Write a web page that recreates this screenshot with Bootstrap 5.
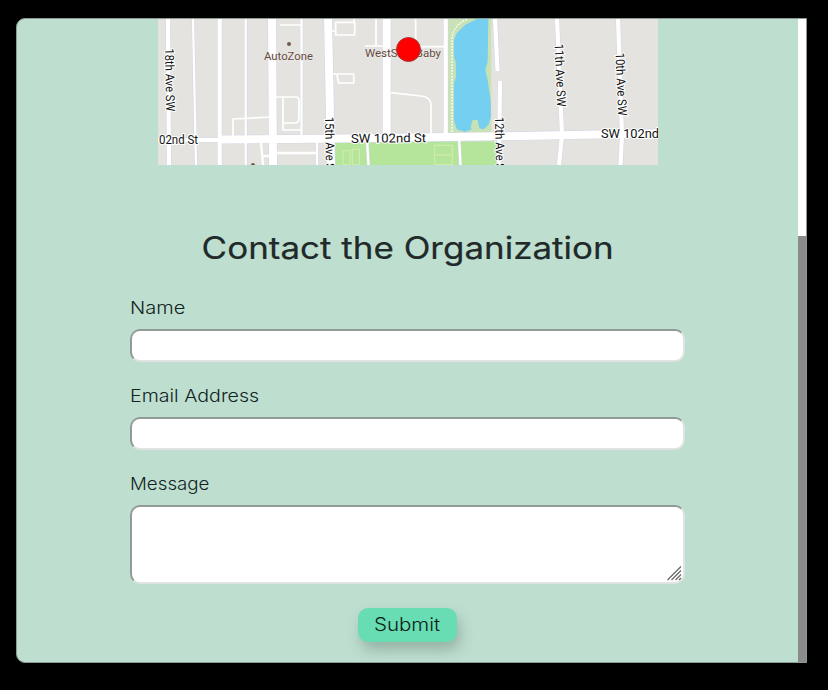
<!DOCTYPE html>
<html lang="en">
<head>
<meta charset="utf-8">
<meta name="viewport" content="width=device-width, initial-scale=1">
<title>Contact the Organization</title>
<link href="https://cdn.jsdelivr.net/npm/bootstrap@5.3.0/dist/css/bootstrap.min.css" rel="stylesheet">
<style>
body{background:#000;font-family:Inter,"Open Sans",sans-serif;color:#1c2b28;height:690px;overflow:hidden;padding:18px 21px 27px 16px}
.panel{width:791px;height:645px;border:1px solid #8b9b94;border-radius:9px 0 0 9px;background:#bedfd0}
.panel-body{margin-top:-1px;min-width:0}
.map{width:500px;height:147px}
.title{font-size:31px;font-weight:400;line-height:38px;margin:64px 0 27px;color:#212a29;white-space:nowrap;transform:scaleX(1.128);-webkit-text-stroke:.2px #212a29}
.contact-form{width:555px}
.groups{gap:20px}
.field-label{font-size:17.5px;line-height:27px;height:27px;margin-bottom:8px;font-weight:300;color:#12231f;transform-origin:0 50%;transform:scaleX(1.12)}
.label-name{transform:scaleX(1.145)}
.label-message{transform:scaleX(1.07)}
.field{border:2px solid;border-color:#929a96 #dfe3e1 #dfe3e1 #929a96;border-radius:10px;background:#fff;height:33px;width:100%;display:block;outline:0}
textarea.field{height:79px;resize:none}
.grip{right:3px;bottom:3px}
.send{width:99px;height:34px;border:0;border-radius:10px;background:#68dcb3;color:#0b1c16;font-size:18px;font-weight:300;box-shadow:3px 8px 14px rgba(60,80,70,.3);margin-top:24px;padding:0 0 1px}
.send span{display:inline-block;transform:scaleX(1.14)}
.track{width:8px;background:#fff;padding-top:217px}
.thumb{background:#8b8b8b}
.map text{font-family:Roboto,sans-serif;font-size:12.5px;fill:#111;stroke:#fff;stroke-width:2px;paint-order:stroke}
.map .poi{fill:#654a3b;stroke:#eee;stroke-width:1px;font-size:11.5px}
.roads{fill:none;stroke-linejoin:round}
.casing{stroke:#d4d6e4}
.surface{stroke:#fff}
.casing .alley{stroke-width:3.3px}
.casing .avenue{stroke-width:5.2px}
.casing .main-road{stroke-width:9.2px}
.surface .drive{stroke-width:1.7px}
.surface .alley{stroke-width:2.3px}
.surface .avenue{stroke-width:4.2px}
.surface .main-road{stroke-width:8px}
</style>
<script src="https://cdn.jsdelivr.net/npm/bootstrap@5.3.0/dist/js/bootstrap.bundle.min.js"></script>
</head>
<body>
<main class="panel d-flex overflow-hidden">
<div class="panel-body flex-grow-1 d-flex flex-column align-items-center">
<svg class="map flex-shrink-0" viewBox="158 18 500 147" role="img" aria-label="Street map">
<rect x="158" y="18" width="500" height="147" fill="#e4e3e0"/>
<!-- park and lake -->
<g transform="translate(320 10) scale(.33333)">
<path d="M384 20H514V380H384Z" fill="#c8e2b6"/>
<path d="M45 394H540V470H45Z" fill="#b5e59b"/>
<path d="M505 20L503 155 496 180 503 210 507 240 512 270 513 320 505 345 490 358 478 355 473 330 458 330 452 350 455 358 435 366 410 358 402 330V220L408 200 407 155 402 140V90L410 70 435 45 470 27 480 20Z" fill="#75cff0"/>
<path d="M396 365V85Q400 45 440 28" fill="none" stroke="#fff" stroke-width="4" stroke-dasharray="5 4"/>
<path d="M69 422H90V464H69ZM97 418H118V464H97ZM344 406H397V464H344ZM344 435H397" fill="none" stroke="#d5edaa" stroke-width="3"/>
</g>
<!-- roads: grey-blue casing below, white surface above -->
<g class="roads casing">
<path class="avenue" d="M168 18L169 165M219.700 18V165M445.700 18V137M495 18L497.500 71M500 81L499 165M557 18L562 135 559 165M618 18L622 135 620.500 165M158 140H222"/>
<path class="alley" d="M193 18L196 165M245.700 18V165M301.500 18V139M367 139L368.500 165M459 137L460.500 165M317 139V165"/>
<path class="main-road" d="M272 18L273 165M328 18L331 165M386.700 18V137M220 139.500L320 138.700 500 136.300 658 133.200"/>
</g>
<g class="roads surface">
<path class="avenue" d="M168 18L169 165M219.700 18V165M445.700 18V137M495 18L497.500 71M500 81L499 165M557 18L562 135 559 165M618 18L622 135 620.500 165M158 140H222"/>
<path class="alley" d="M193 18L196 165M245.700 18V165M301.500 18V139M367 139L368.500 165M459 137L460.500 165M261 142L263 165M261 156H273M317 139V165M273 153H317"/>
<path class="drive" d="M280 25H301M233 137V119L272 117M276 97H297Q299 98 299 101V118Q299 123 295 123H284M283 97V130H301M335.700 22.300H354.700V35H335.700ZM332 31H336M354 22V18M332 74H353.700V83H338.700L337 75M376 18V46M365 46H383M415.700 18V46M420 46.700H444M391 92.700L421 96Q431 97 431 105V136"/>
<path class="main-road" d="M272 18L273 165M328 18L331 165M386.700 18V137M220 139.500L320 138.700 500 136.300 658 133.200"/>
</g>
<circle cx="289" cy="44" r="2" fill="#705a4c"/><circle cx="253" cy="165" r="2" fill="#705a4c"/>
<text class="poi" x="264" y="60.300" textLength="49" lengthAdjust="spacingAndGlyphs">AutoZone</text>
<text class="poi" x="365" y="57" textLength="76" lengthAdjust="spacingAndGlyphs">WestSide Baby</text>
<text x="159" y="144" textLength="39" lengthAdjust="spacingAndGlyphs">02nd St</text>
<text x="351" y="142.500" textLength="75" lengthAdjust="spacingAndGlyphs" transform="rotate(-.6 388 139)">SW 102nd St</text>
<text x="601" y="138" textLength="58" lengthAdjust="spacingAndGlyphs">SW 102nd</text>
<text transform="translate(165 48.500) rotate(89)" textLength="63" lengthAdjust="spacingAndGlyphs">18th Ave SW</text>
<text transform="translate(325 117) rotate(89)" textLength="63" lengthAdjust="spacingAndGlyphs">15th Ave SW</text>
<text transform="translate(495 117) rotate(89)" textLength="63" lengthAdjust="spacingAndGlyphs">12th Ave SW</text>
<text transform="translate(554.500 44) rotate(87.500)" textLength="63" lengthAdjust="spacingAndGlyphs">11th Ave SW</text>
<text transform="translate(615.500 53) rotate(87.500)" textLength="63" lengthAdjust="spacingAndGlyphs">10th Ave SW</text>
<circle cx="408.500" cy="49.500" r="12" fill="#f00" stroke="#a33b38"/>
</svg>
<h2 class="title">Contact the Organization</h2>
<form class="contact-form d-flex flex-column">
<div class="groups d-flex flex-column">
<div><label class="field-label label-name d-table" for="name">Name</label><input class="field" id="name" type="text"></div>
<div><label class="field-label d-table" for="email">Email Address</label><input class="field" id="email" type="email"></div>
<div><label class="field-label label-message d-table" for="message">Message</label>
<div class="position-relative"><textarea class="field" id="message"></textarea>
<svg class="grip position-absolute" width="15" height="15" viewBox="0 0 15 15" stroke="#666" stroke-width="1.200"><path d="M.5 14L14 .5M4.500 14L14 4.500M8.500 14L14 8.500M12 14L14 12"/></svg></div></div>
</div>
<button class="send align-self-center" type="button"><span>Submit</span></button>
</form>
</div>
<div class="track d-flex flex-column"><div class="thumb flex-grow-1"></div></div>
</main>
</body>
</html>
